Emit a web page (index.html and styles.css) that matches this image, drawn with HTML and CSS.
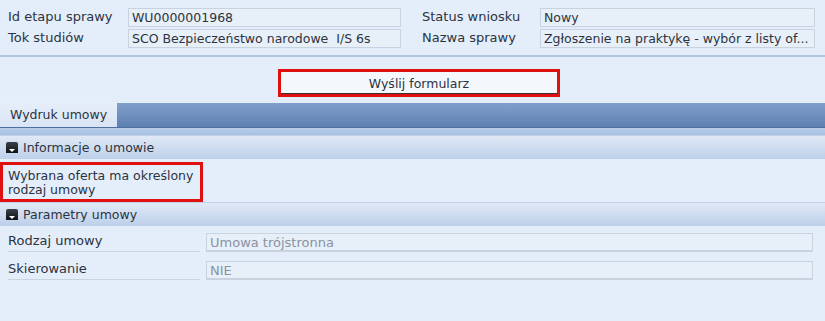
FILE: index.html
```html
<!DOCTYPE html>
<html lang="pl">
<head>
<meta charset="UTF-8" />
<title>Wniosek</title>
<link rel="stylesheet" href="styles.css">
</head>
<body>
  <div class="header">
    <div class="header-col">
      <div class="field">
        <span class="field-label">Id etapu sprawy</span>
        <span class="field-value">WU0000001968</span>
      </div>
      <div class="field">
        <span class="field-label">Tok studiów</span>
        <span class="field-value">SCO Bezpieczeństwo narodowe&nbsp; I/S 6s</span>
      </div>
    </div>
    <div class="header-col right">
      <div class="field">
        <span class="field-label">Status wniosku</span>
        <span class="field-value">Nowy</span>
      </div>
      <div class="field">
        <span class="field-label">Nazwa sprawy</span>
        <span class="field-value">Zgłoszenie na praktykę - wybór z listy of...</span>
      </div>
    </div>
  </div>

  <div class="actions">
    <button type="button" class="submit-btn">Wyślij formularz</button>
  </div>

  <div class="tabs">
    <div class="tab active">Wydruk umowy</div>
  </div>
  <div class="tab-gap"></div>

  <div class="section-head">
    <span class="toggle"></span>Informacje o umowie
  </div>
  <div class="info">
    <p class="info-msg">Wybrana oferta ma określony<br>rodzaj umowy</p>
  </div>

  <div class="section-head">
    <span class="toggle"></span>Parametry umowy
  </div>
  <div class="params">
    <div class="param">
      <span class="param-label">Rodzaj umowy</span>
      <span class="param-value">Umowa trójstronna</span>
    </div>
    <div class="param">
      <span class="param-label">Skierowanie</span>
      <span class="param-value">NIE</span>
    </div>
  </div>
</body>
</html>
```

FILE: styles.css
```css
* {
  box-sizing: border-box;
}

body {
  margin: 0;
  background: #e4eefb;
  font-family: Tahoma, "DejaVu Sans", sans-serif;
  font-size: 12.5px;
  color: #2c3340;
}

/* Header */
.header {
  display: flex;
  padding: 8px 8px 0 8px;
  height: 57px;
  border-bottom: 2px solid #b3c6e0;
}

.header-col {
  width: 393px;
}

.header-col.right {
  margin-left: 21px;
}

.field {
  display: flex;
  height: 21px;
}

.field-label {
  width: 120px;
  padding-top: 1px;
  font-size: 13px;
}

.field-value {
  flex: 1;
  height: 19px;
  padding: 1px 3px 0;
  background: #e7eff9;
  border: 1px solid #c9d3e0;
  white-space: nowrap;
  overflow: hidden;
}

.header-col.right .field-label {
  width: 118px;
}

/* Button */
.actions {
  display: flex;
  justify-content: center;
  padding: 12px 0 6px;
}

.submit-btn {
  width: 282px;
  height: 28px;
  margin-left: 13px;
  font: inherit;
  color: #2c3340;
  background: #f4f8fd;
  border: 3px solid #e01010;
  box-shadow: inset 0 -2px 0 -1px #333;
}

/* Tabs */
.tabs {
  display: flex;
  height: 25px;
  background: linear-gradient(#829fc9, #5d80b2);
  border-bottom: 1px solid #4f6f9e;
}

.tab {
  width: 117px;
  padding: 4px 0 0 10px;
  background: linear-gradient(#e6eefa, #d8e4f4);
  color: #2c3340;
}

.tab-gap {
  height: 7px;
  background: linear-gradient(#b8cde9, #a8c1e3);
}

/* Collapsible sections */
.section-head {
  display: flex;
  align-items: center;
  height: 24px;
  padding-left: 6px;
  background: linear-gradient(#e0e9f6, #bcd0ea);
  border-top: 1px solid #c2d2e8;
}

.toggle {
  position: relative;
  width: 12px;
  height: 11px;
  margin-right: 5px;
  background: linear-gradient(#3a3f48, #101216);
  border-radius: 2px 2px 0 0;
}

.toggle::after {
  content: "";
  position: absolute;
  left: 3px;
  bottom: 1px;
  border-left: 3px solid transparent;
  border-right: 3px solid transparent;
  border-top: 3px solid #fff;
}

.info {
  padding-top: 3px;
}

.info-msg {
  margin: 0;
  width: 203px;
  height: 40px;
  padding: 4px 5px 0;
  border: 3px solid #e01010;
  line-height: 14px;
  white-space: nowrap;
}

/* Parameters */
.params {
  padding: 7px 12px 0 8px;
}

.param {
  display: flex;
  height: 28px;
}

.param-label {
  width: 192px;
  height: 19px;
  margin-right: 6px;
  border-bottom: 1px solid #c9d3e0;
  font-size: 13px;
}

.param-value {
  flex: 1;
  height: 19px;
  padding: 1px 3px 0;
  background: #e7eff9;
  border: 1px solid #c9d3e0;
  border-bottom-width: 2px;
  color: #8a93a3;
  font-size: 13px;
}
```
